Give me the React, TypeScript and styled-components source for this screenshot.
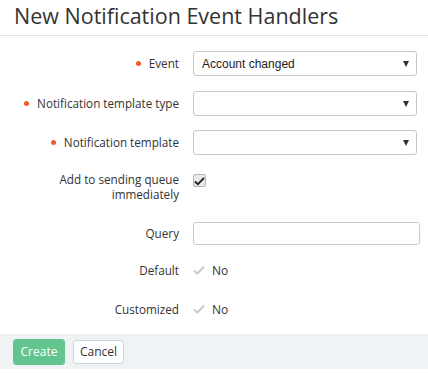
import React from 'react'
import styled, { createGlobalStyle } from 'styled-components';

const GlobalStyle = createGlobalStyle`
    body {
        margin: 0;
        background: #fff;
        font-family: 'Open Sans', 'Liberation Sans', sans-serif;
        color: #333;
    }
`;

const Page = styled.div`
    width: 428px;
    height: 375px;
    display: flex;
    flex-direction: column;
    overflow: hidden;
`;

const Header = styled.div`
    height: 35px;
    border-bottom: 1px solid #dde3ea;
    padding: 0 14px;
    display: flex;
    align-items: center;
`;

const Title = styled.h1`
    margin: 0;
    font-size: 21.5px;
    font-weight: 400;
    color: #333;
    line-height: 30px;
    margin-top: -4px;
`;

const Form = styled.div`
    display: flex;
    flex-direction: column;
    padding-top: 15px;
    flex: 1;
`;

const Row = styled.div<{ $h: number; $mb: number; $top?: boolean }>`
    display: grid;
    grid-template-columns: 179px 1fr;
    column-gap: 14px;
    align-items: ${p => (p.$top ? 'start' : 'center')};
    height: ${p => p.$h}px;
    margin-bottom: ${p => p.$mb}px;
`;

const Label = styled.div<{ $required?: boolean }>`
    text-align: right;
    font-size: 11.7px;
    line-height: 15px;
    color: #333;

    ${p => p.$required && `
        &::before {
            content: '';
            display: inline-block;
            width: 5px;
            height: 5px;
            border-radius: 50%;
            background: #ef5b2a;
            margin-right: 8px;
            vertical-align: 2px;
        }
    `}
`;

const SelectBox = styled.div`
    width: 224px;
    height: 25px;
    box-sizing: border-box;
    border: 1px solid #c4c9ce;
    border-radius: 3px;
    display: flex;
    align-items: center;
    justify-content: space-between;
    padding: 0 7px 0 8px;
    font-family: 'Liberation Sans', Arial, sans-serif;
    font-size: 12px;
    color: #222;
`;

const Arrow = styled.span`
    width: 0;
    height: 0;
    border-left: 3px solid transparent;
    border-right: 3px solid transparent;
    border-top: 6px solid #333;
`;

const TextInput = styled.div`
    width: 227px;
    height: 23px;
    box-sizing: border-box;
    border: 1px solid #c4c9ce;
    border-radius: 3px;
`;

const CheckBox = styled.div`
    width: 11px;
    height: 11px;
    margin-top: 2px;
    border: 1px solid #b5b5b5;
    border-radius: 2px;
    background: #eaeaea;
    display: flex;
    align-items: center;
    justify-content: center;
`;

const Value = styled.div`
    display: flex;
    align-items: center;
    gap: 7px;
    font-size: 12px;
    color: #333;
`;

const Footer = styled.div`
    height: 35px;
    background: #f0f3f6;
    display: flex;
    align-items: center;
    gap: 8px;
    padding: 0 13px;
    margin-bottom: 6px;
`;

const Button = styled.button<{ $primary?: boolean }>`
    height: ${p => (p.$primary ? 26 : 24)}px;
    width: ${p => (p.$primary ? 52 : 51)}px;
    padding: 0;
    border-radius: 3px;
    font-family: 'Open Sans', 'Liberation Sans', sans-serif;
    font-size: 12px;
    border: 1px solid ${p => (p.$primary ? '#62c48f' : '#cfd4d9')};
    background: ${p => (p.$primary ? '#62c48f' : '#fff')};
    color: ${p => (p.$primary ? '#fff' : '#333')};
`;

function Tick({ color }: { color: string }) {
    return (
        <svg width="12" height="10" viewBox="0 0 12 10">
            <path d="M1 5.5 L4.3 8.5 L11 1.5" fill="none" stroke={color} strokeWidth="2" />
        </svg>
    );
}

function App() {
    return (
        <Page>
            <GlobalStyle />
            <Header>
                <Title>New Notification Event Handlers</Title>
            </Header>
            <Form>
                <Row $h={25} $mb={15}>
                    <Label $required>Event</Label>
                    <SelectBox>
                        <span>Account changed</span>
                        <Arrow />
                    </SelectBox>
                </Row>
                <Row $h={25} $mb={14}>
                    <Label $required>Notification template type</Label>
                    <SelectBox>
                        <span />
                        <Arrow />
                    </SelectBox>
                </Row>
                <Row $h={25} $mb={17}>
                    <Label $required>Notification template</Label>
                    <SelectBox>
                        <span />
                        <Arrow />
                    </SelectBox>
                </Row>
                <Row $h={33} $mb={17} $top>
                    <Label>Add to sending queue immediately</Label>
                    <CheckBox>
                        <Tick color="#222" />
                    </CheckBox>
                </Row>
                <Row $h={23} $mb={14}>
                    <Label>Query</Label>
                    <TextInput />
                </Row>
                <Row $h={22} $mb={17}>
                    <Label>Default</Label>
                    <Value>
                        <Tick color="#c5cbd1" />
                        <span>No</span>
                    </Value>
                </Row>
                <Row $h={22} $mb={0}>
                    <Label>Customized</Label>
                    <Value>
                        <Tick color="#c5cbd1" />
                        <span>No</span>
                    </Value>
                </Row>
            </Form>
            <Footer>
                <Button $primary>Create</Button>
                <Button>Cancel</Button>
            </Footer>
        </Page>
    );
}

export default App;
